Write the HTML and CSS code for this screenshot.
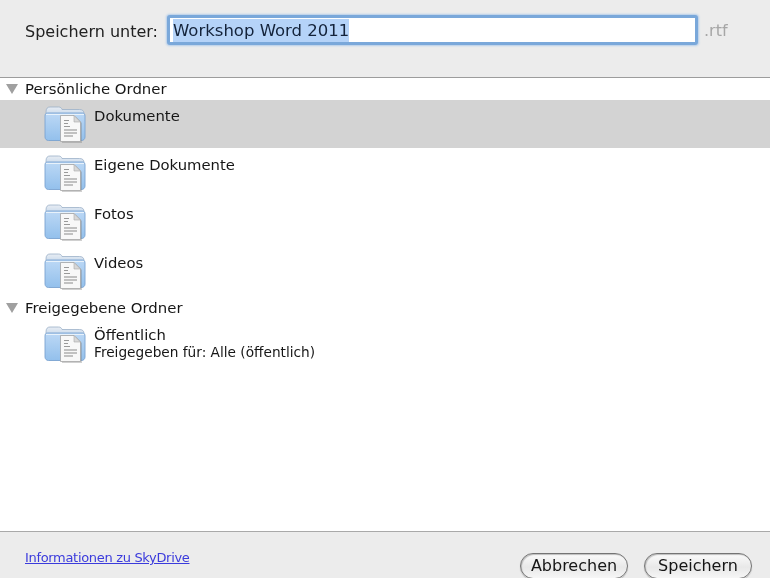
FILE: index.html
```html
<!DOCTYPE html>
<html lang="de">
<head>
<meta charset="utf-8">
<title>Speichern unter</title>
<link rel="stylesheet" href="styles.css">
</head>
<body>
<svg class="defs" width="0" height="0" aria-hidden="true">
  <defs>
    <linearGradient id="fb" x1="0" y1="0" x2="0" y2="1">
      <stop offset="0" stop-color="#bcd8f5"/>
      <stop offset="1" stop-color="#93c0ec"/>
    </linearGradient>
    <linearGradient id="ft" x1="0" y1="0" x2="0" y2="1">
      <stop offset="0" stop-color="#e8edf3"/>
      <stop offset="1" stop-color="#bcd2ea"/>
    </linearGradient>
    <symbol id="folder" viewBox="0 0 42 37">
      <path d="M2 6C2 2.500 3.500 1 6 1h8.500c2 0 3 1 3.500 2.500h17.500C38.500 3.500 40 5 40 7.500V12H2z" fill="url(#ft)" stroke="#9bb0c8" stroke-width=".8"/>
      <path d="M1 10c0-2 1-3 2.500-3h35C40 7 41 8 41 10v21c0 2-1.500 3.500-3.500 3.500h-33C2.500 34.500 1 33 1 31z" fill="url(#fb)" stroke="#7aa3d0" stroke-width=".9"/>
      <path d="M2 8.500h38" stroke="#e8f2fb" stroke-width="1"/>
      <path d="M18 11h14l6 6v20H18z" fill="#777" opacity=".35"/>
      <path d="M16.500 9.500h13.500l6.500 6.500v19.500h-20z" fill="#f8f8f8" stroke="#a5a5a5" stroke-width=".8"/>
      <path d="M30 9.500V16h6.500z" fill="#d8d8d8" stroke="#aaa" stroke-width=".6"/>
      <path d="M20 14.500h5M20 17.500h4M20 20.500h6" stroke="#999" stroke-width="1"/>
      <path d="M20 24h13M20 27h13M20 30h9" stroke="#8a8a8a" stroke-width="1"/>
    </symbol>
  </defs>
</svg>
<main class="dialog">
  <header class="save-bar">
    <label class="save-label" for="name">Speichern unter:</label>
    <div class="name-field" id="name"><span class="name-sel">Workshop Word 2011</span></div>
    <span class="ext">.rtf</span>
  </header>
  <section class="browser">
    <div class="group"><span class="tri"></span>Persönliche Ordner</div>
    <div class="row selected"><svg class="folder"><use href="#folder"/></svg><div class="row-text"><div class="row-name">Dokumente</div></div></div>
    <div class="row"><svg class="folder"><use href="#folder"/></svg><div class="row-text"><div class="row-name">Eigene Dokumente</div></div></div>
    <div class="row"><svg class="folder"><use href="#folder"/></svg><div class="row-text"><div class="row-name">Fotos</div></div></div>
    <div class="row"><svg class="folder"><use href="#folder"/></svg><div class="row-text"><div class="row-name">Videos</div></div></div>
    <div class="group group-shared"><span class="tri"></span>Freigegebene Ordner</div>
    <div class="row shared"><svg class="folder"><use href="#folder"/></svg><div class="row-text"><div class="row-name">Öffentlich</div><div class="row-sub">Freigegeben für: Alle (öffentlich)</div></div></div>
  </section>
  <footer class="actions">
    <a class="info" href="#">Informationen zu SkyDrive</a>
    <div class="buttons">
      <button class="btn" type="button">Abbrechen</button>
      <button class="btn" type="button">Speichern</button>
    </div>
  </footer>
</main>
</body>
</html>
```
FILE: styles.css
```css
html, body { margin: 0; padding: 0; height: 100%; overflow: hidden; background: #ececec; }
body { font-family: "DejaVu Sans", "Liberation Sans", sans-serif; color: #1c1c1c; }
.defs { position: absolute; }
.dialog { display: flex; flex-direction: column; height: 578px; overflow: hidden; filter: blur(.35px); }
.save-bar { box-sizing: border-box; display: flex; align-items: flex-start; padding: 15px 0 0 25px; background: #ececec; border-bottom: 1px solid #9c9c9c; flex: none; height: 78px; }
.save-label { font-size: 16px; line-height: 33px; width: 142px; flex: none; color: #222; }
.name-field { width: 531px; height: 30px; box-sizing: border-box; border: 3px solid #7aa8da; border-radius: 3px; background: #fff; box-shadow: 0 0 2px 1px #b3cdea; padding: 1px 0 0 3px; flex: none; }
.name-sel { display: inline-block; background: #b5d3f8; font-size: 16.500px; line-height: 23px; height: 23px; color: #14233a; }
.ext { margin-left: 6px; font-size: 16px; line-height: 31px; color: #a6a6a6; }
.browser { flex: 1; background: #fff; min-height: 0; }
.group { display: flex; align-items: center; height: 22px; font-size: 14.900px; color: #161616; padding-left: 6px; }
.group-shared { height: 24px; }
.tri { width: 0; height: 0; border-left: 6px solid transparent; border-right: 6px solid transparent; border-top: 10px solid #a0a0a0; margin-right: 7px; }
.row { display: flex; height: 49px; padding-left: 44px; box-sizing: border-box; padding-top: 6px; }
.row.selected { background: #d3d3d3; height: 48px; margin-bottom: 1px; }
.row.shared { height: 48px; padding-top: 6px; }
.folder { width: 42px; height: 37px; flex: none; }
.row-text { margin-left: 8px; margin-top: 1px; }
.row.shared .row-text { margin-top: 0; }
.row-name { font-size: 14.800px; line-height: 18px; color: #161616; }
.row-sub { font-size: 13.700px; line-height: 16px; color: #161616; }
.actions { flex: none; height: 47px; box-sizing: border-box; border-top: 1px solid #a9a9a9; background: #ececec; display: flex; justify-content: space-between; align-items: flex-start; padding: 0 18px 0 25px; }
.info { font-size: 13px; letter-spacing: -.32px; line-height: 18px; margin-top: 17px; color: #3b3bdc; text-decoration: underline; }
.buttons { display: flex; gap: 16px; margin-top: 21px; }
.btn { width: 108px; height: 26px; box-sizing: border-box; padding: 0; border: 1px solid #747474; border-radius: 13px; background: linear-gradient(#fbfbfb, #e8e8e8 55%, #f6f6f6); font: 16px/22px "DejaVu Sans", sans-serif; color: #161616; box-shadow: 0 1px 1px #bbb, inset 1px 1px 1px #bdbdbd; }
```
